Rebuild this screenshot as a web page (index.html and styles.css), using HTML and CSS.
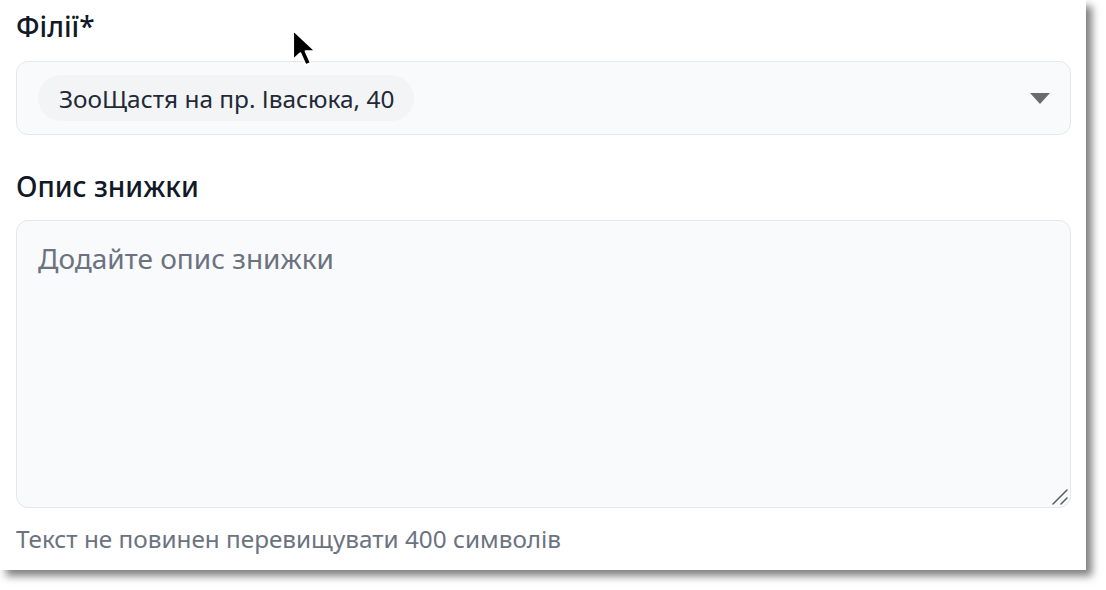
FILE: index.html
```html
<!DOCTYPE html>
<html lang="uk">
<head>
<meta charset="utf-8">
<link rel="stylesheet" href="styles.css">
</head>
<body>
<div class="card">
  <div class="field">
    <label class="label">Філії*</label>
    <div class="select">
      <span class="chip">ЗооЩастя на пр. Івасюка, 40</span>
      <svg class="caret" width="20" height="11" viewBox="0 0 20 11"><path d="M0 0 H20 L10 11 Z" fill="#6b6b6b"/></svg>
    </div>
  </div>
  <div class="field field-desc">
    <label class="label">Опис знижки</label>
    <div class="textarea-wrap">
      <textarea class="textarea" placeholder="Додайте опис знижки"></textarea>
      <svg class="resizer" width="16" height="16" viewBox="0 0 16 16"><path d="M1 15 L15 1 M9 15 L15 9" stroke="#5a5a5a" stroke-width="1.5" stroke-linecap="round"/></svg>
    </div>
    <div class="hint">Текст не повинен перевищувати 400 символів</div>
  </div>
  <svg class="cursor" width="28" height="40" viewBox="0 0 21 30"><path d="M1.5 1.5 L1.5 24 L7 19 L11 28 L15 26.2 L11 17.5 L18.5 17.5 Z" fill="#000" stroke="#fff" stroke-width="1.6" stroke-linejoin="round"/></svg>
</div>
</body>
</html>
```
FILE: styles.css
```css
html, body {
  margin: 0;
  padding: 0;
  background: #ffffff;
}
body {
  font-family: "Noto Sans", "Open Sans", sans-serif;
  min-height: 590px;
}
.card {
  position: relative;
  width: 1086px;
  height: 570px;
  box-sizing: border-box;
  padding: 8px 15px 0 16px;
  background: #ffffff;
  box-shadow: 6px 6px 8px rgba(0, 0, 0, 0.5);
}
.field {
  display: flex;
  flex-direction: column;
}
.label {
  font-size: 28px;
  line-height: 36px;
  color: #111827;
  font-weight: 500;
}
.select {
  margin-top: 17px;
  height: 74px;
  box-sizing: border-box;
  border: 1.5px solid #e5e7eb;
  border-radius: 12px;
  background: #f9fafb;
  display: flex;
  align-items: center;
  padding: 0 20px 0 21px;
}
.chip {
  background: #f3f4f6;
  border-radius: 23px;
  height: 46px;
  display: flex;
  align-items: center;
  padding: 0 20px 0 21px;
  font-size: 24.4px;
  color: #1f2937;
}
.caret {
  margin-left: auto;
}
.field-desc {
  margin-top: 33px;
}
.textarea-wrap {
  position: relative;
  margin-top: 16px;
  display: flex;
}
.textarea {
  flex: 1;
  height: 288px;
  box-sizing: border-box;
  border: 1.5px solid #e5e7eb;
  border-radius: 12px;
  background: #f9fafb;
  padding: 18px 21px;
  font-family: "Noto Sans", "Open Sans", sans-serif;
  font-size: 28px;
  color: #1f2937;
  outline: none;
  resize: none;
}
.textarea::placeholder {
  color: #6b7280;
}
.resizer {
  position: absolute;
  right: 3px;
  bottom: 3px;
}
.hint {
  margin-top: 14px;
  font-size: 24.3px;
  color: #6b7280;
}
.cursor {
  position: absolute;
  left: 291px;
  top: 28px;
}
```
